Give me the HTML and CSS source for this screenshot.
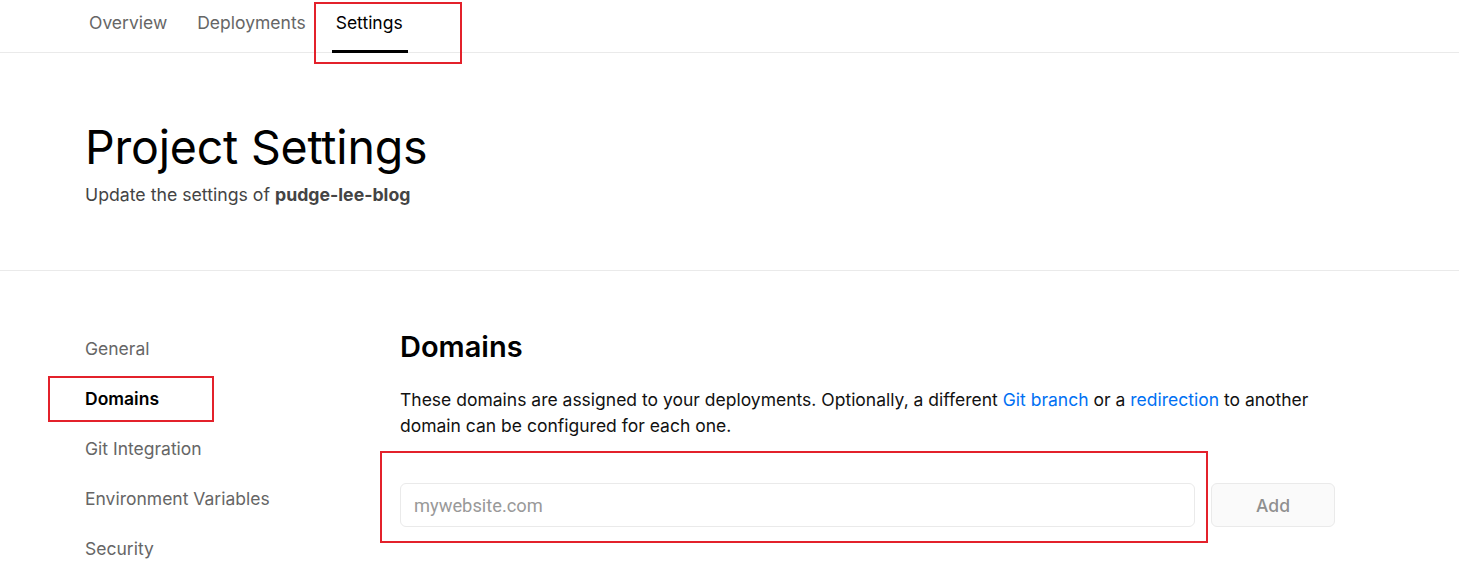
FILE: index.html
```html
<!DOCTYPE html>
<html>
<head>
<meta charset="utf-8">
<link rel="stylesheet" href="styles.css">
</head>
<body>
<div class="page">
  <nav class="tabs">
    <a class="tab">Overview</a>
    <a class="tab">Deployments</a>
    <a class="tab active">Settings</a>
  </nav>
  <header class="hero">
    <h1>Project Settings</h1>
    <p class="sub">Update the settings of <strong>pudge-lee-blog</strong></p>
  </header>
  <section class="body">
    <aside class="side">
      <a class="side-item">General</a>
      <a class="side-item active">Domains</a>
      <a class="side-item">Git Integration</a>
      <a class="side-item">Environment Variables</a>
      <a class="side-item">Security</a>
    </aside>
    <main class="main">
      <h2>Domains</h2>
      <p class="desc">These domains are assigned to your deployments. Optionally, a different <a class="link">Git branch</a> or a <a class="link">redirection</a> to another domain can be configured for each one.</p>
      <div class="add-row">
        <input class="domain-input" type="text" placeholder="mywebsite.com">
        <button class="add-btn">Add</button>
      </div>
    </main>
  </section>
  <div class="mark mark-tab"></div>
  <div class="mark mark-side"></div>
  <div class="mark mark-input"></div>
</div>
</body>
</html>
```

FILE: styles.css
```css
* { box-sizing: border-box; }
html, body { margin: 0; padding: 0; background: #fff; }
body {
  font-family: Inter, "Noto Sans", sans-serif;
  color: #000;
  overflow: hidden;
}
.page { position: relative; width: 1459px; height: 564px; overflow: hidden; }

.tabs {
  display: flex;
  align-items: stretch;
  gap: 22px;
  height: 53px;
  padding-left: 85px;
  border-bottom: 1px solid #eaeaea;
}
.tab {
  display: flex;
  align-items: flex-start;
  padding: 12px 4px 0;
  font-size: 17.5px;
  color: #666;
  line-height: 21px;
}
.tab.active {
  color: #000;
  box-shadow: inset 0 -3px 0 #000;
  height: 53px;
  margin-bottom: -1px;
  padding-right: 5px;
}

.hero {
  padding: 66px 85px 0;
  height: 218px;
  border-bottom: 1px solid #eaeaea;
}
.hero h1 {
  margin: 0;
  font-size: 46.5px;
  font-weight: 400;
  line-height: 56px;
  letter-spacing: -0.2px;
}
.sub {
  margin: 8px 0 0;
  font-size: 17.7px;
  color: #444;
  line-height: 24px;
}
.sub strong { font-weight: 700; }

.body {
  display: flex;
  padding: 57px 0 0 85px;
}
.side {
  width: 315px;
  display: flex;
  flex-direction: column;
  padding-top: 9px;
}
.side-item {
  font-size: 17.5px;
  line-height: 24px;
  height: 50px;
  color: #666;
}
.side-item.active { color: #000; font-weight: 600; }

.main { width: 935px; }
.main h2 {
  margin: 0;
  font-size: 29px;
  font-weight: 600;
  line-height: 36px;
  margin-top: 1px;
}
.desc {
  margin: 22px 0 0;
  font-size: 17.5px;
  line-height: 26px;
  color: #111;
}
.link { color: #0070f3; }

.add-row {
  display: flex;
  gap: 16px;
  margin-top: 44px;
}
.domain-input {
  width: 795px;
  height: 44px;
  border: 1px solid #eaeaea;
  border-radius: 6px;
  padding: 0 13px;
  font-family: Roboto, Arial, sans-serif;
  font-size: 18.3px;
  outline: none;
}
.domain-input::placeholder { color: #999; }
.add-btn {
  width: 124px;
  height: 44px;
  border: 1px solid #eaeaea;
  border-radius: 6px;
  background: #fafafa;
  color: #8f8f8f;
  font-family: Inter, sans-serif;
  font-size: 17.5px;
  font-weight: 500;
}

.mark {
  position: absolute;
  border: 2px solid #e3212b;
  pointer-events: none;
}
.mark-tab { left: 314px; top: 2px; width: 148px; height: 62px; }
.mark-side { left: 48px; top: 376px; width: 166px; height: 46px; }
.mark-input { left: 380px; top: 451px; width: 828px; height: 92px; }
```
